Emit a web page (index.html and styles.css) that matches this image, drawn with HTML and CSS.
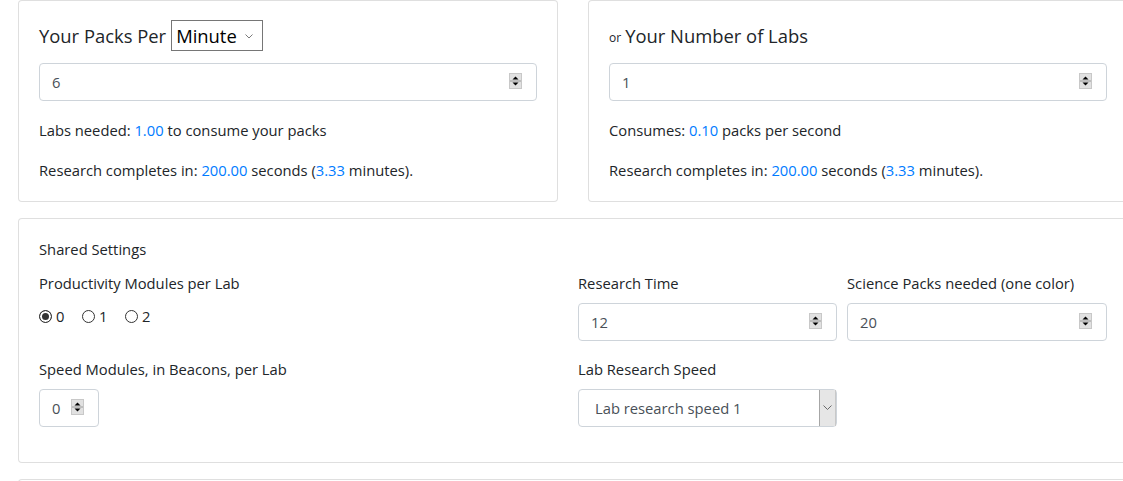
FILE: index.html
```html
<!DOCTYPE html>
<html lang="en">
<head>
<meta charset="utf-8">
<title>Research calculator</title>
<link rel="stylesheet" href="styles.css">
</head>
<body>
<div class="page">
  <div class="top-row">
    <section class="card calc">
      <div class="calc-title">
        <span>Your Packs Per</span>
        <span class="unit-wrap">
          <select class="unit"><option>Minute</option><option>Second</option></select>
          <svg class="unit-caret" width="8" height="5" viewBox="0 0 8 5"><path d="M0.5 0.5L4 4L7.5 0.5" fill="none" stroke="#7a7a7a" stroke-width="1"/></svg>
        </span>
      </div>
      <div class="num">
        <input class="field" type="number" value="6">
        <svg class="spin" width="13" height="16" viewBox="0 0 13 16"><rect x="0.5" y="0.5" width="12" height="15" fill="#e1e1e1" stroke="#c8c8c8"/><line x1="1" y1="8" x2="12" y2="8" stroke="#9a9a9a"/><path d="M3.5 6.5H9.5L6.5 3.5Z" fill="#000"/><path d="M3.5 9.5H9.5L6.5 12.5Z" fill="#000"/></svg>
      </div>
      <p>Labs needed: <span class="val">1.00</span> to consume your packs</p>
      <p>Research completes in: <span class="val">200.00</span> seconds (<span class="val">3.33</span> minutes).</p>
    </section>
    <section class="card calc">
      <div class="calc-title">
        <small class="or">or</small>
        <span>Your Number of Labs</span>
      </div>
      <div class="num">
        <input class="field" type="number" value="1">
        <svg class="spin" width="13" height="16" viewBox="0 0 13 16"><rect x="0.5" y="0.5" width="12" height="15" fill="#e1e1e1" stroke="#c8c8c8"/><line x1="1" y1="8" x2="12" y2="8" stroke="#9a9a9a"/><path d="M3.5 6.5H9.5L6.5 3.5Z" fill="#000"/><path d="M3.5 9.5H9.5L6.5 12.5Z" fill="#000"/></svg>
      </div>
      <p>Consumes: <span class="val">0.10</span> packs per second</p>
      <p>Research completes in: <span class="val">200.00</span> seconds (<span class="val">3.33</span> minutes).</p>
    </section>
  </div>

  <section class="card shared">
    <div class="shared-title">Shared Settings</div>
    <div class="shared-grid">
      <div class="group">
        <div class="label">Productivity Modules per Lab</div>
        <div class="radios">
          <label class="radio"><input type="radio" name="prod" checked><span>0</span></label>
          <label class="radio"><input type="radio" name="prod"><span>1</span></label>
          <label class="radio"><input type="radio" name="prod"><span>2</span></label>
        </div>
      </div>
      <div class="group">
        <div class="label">Research Time</div>
        <div class="num">
          <input class="field" type="number" value="12">
          <svg class="spin" width="13" height="16" viewBox="0 0 13 16"><rect x="0.5" y="0.5" width="12" height="15" fill="#e1e1e1" stroke="#c8c8c8"/><line x1="1" y1="8" x2="12" y2="8" stroke="#9a9a9a"/><path d="M3.5 6.5H9.5L6.5 3.5Z" fill="#000"/><path d="M3.5 9.5H9.5L6.5 12.5Z" fill="#000"/></svg>
        </div>
      </div>
      <div class="group">
        <div class="label">Science Packs needed (one color)</div>
        <div class="num">
          <input class="field" type="number" value="20">
          <svg class="spin" width="13" height="16" viewBox="0 0 13 16"><rect x="0.5" y="0.5" width="12" height="15" fill="#e1e1e1" stroke="#c8c8c8"/><line x1="1" y1="8" x2="12" y2="8" stroke="#9a9a9a"/><path d="M3.5 6.5H9.5L6.5 3.5Z" fill="#000"/><path d="M3.5 9.5H9.5L6.5 12.5Z" fill="#000"/></svg>
        </div>
      </div>
      <div class="group">
        <div class="label">Speed Modules, in Beacons, per Lab</div>
        <div class="num num-small">
          <input class="field" type="number" value="0">
          <svg class="spin" width="13" height="16" viewBox="0 0 13 16"><rect x="0.5" y="0.5" width="12" height="15" fill="#e1e1e1" stroke="#c8c8c8"/><line x1="1" y1="8" x2="12" y2="8" stroke="#9a9a9a"/><path d="M3.5 6.5H9.5L6.5 3.5Z" fill="#000"/><path d="M3.5 9.5H9.5L6.5 12.5Z" fill="#000"/></svg>
        </div>
      </div>
      <div class="group">
        <div class="label">Lab Research Speed</div>
        <div class="sel">
          <select class="field select"><option>Lab research speed 1</option><option>Lab research speed 2</option></select>
          <span class="sel-btn"><svg width="9" height="6" viewBox="0 0 9 6"><path d="M0.5 0.5L4.5 4.5L8.5 0.5" fill="none" stroke="#6a6a6a" stroke-width="1"/></svg></span>
        </div>
      </div>
    </div>
  </section>

  <section class="card next"></section>
</div>
</body>
</html>
```

FILE: styles.css
```css
html, body {
  margin: 0;
  padding: 0;
  overflow: hidden;
  background: #ffffff;
}

body {
  font-family: "Open Sans", "Noto Sans", "Liberation Sans", sans-serif;
  font-size: 14.75px;
  line-height: 24px;
  color: #212529;
}

.page {
  width: 1110px;
  padding-left: 18px;
}

.top-row {
  display: grid;
  grid-template-columns: 540px 540px;
  column-gap: 30px;
}

.card {
  box-sizing: border-box;
  border: 1px solid rgba(0, 0, 0, 0.125);
  border-radius: 4px;
  background: #fff;
}

.calc {
  padding: 19px 20px 19px;
}

.calc-title {
  display: flex;
  align-items: center;
  height: 31px;
  font-size: 18.4px;
  line-height: 24px;
  margin-bottom: 12px;
  white-space: pre;
}

.or {
  font-size: 12px;
  margin-right: 4px;
  position: relative;
  top: 2px;
}

.unit-wrap {
  position: relative;
  display: inline-flex;
  margin-left: 5px;
}

.unit {
  appearance: none;
  -webkit-appearance: none;
  width: 92px;
  height: 31px;
  box-sizing: border-box;
  border: 1px solid #767676;
  border-radius: 0;
  background: #fff;
  color: #000;
  font-family: inherit;
  font-size: 18.4px;
  padding: 0 0 0 4px;
  margin: 0;
}

.unit-caret {
  position: absolute;
  right: 10px;
  top: 14px;
  pointer-events: none;
}

.num {
  position: relative;
  margin-bottom: 17px;
}

.field {
  display: block;
  width: 100%;
  box-sizing: border-box;
  height: 38px;
  border: 1px solid #ced4da;
  border-radius: 4px;
  padding: 0 12px;
  margin: 0;
  font-family: inherit;
  font-size: 14.75px;
  color: #495057;
  background: #fff;
  -moz-appearance: textfield;
}

.field::-webkit-inner-spin-button,
.field::-webkit-outer-spin-button {
  -webkit-appearance: none;
  margin: 0;
}

.spin {
  position: absolute;
  right: 15px;
  top: 10px;
  display: block;
}

.num-small {
  width: 60px;
}

.calc p {
  margin: 0 0 16px;
}

.calc p:last-child {
  margin-bottom: 0;
}

.val {
  color: #007bff;
}

.shared {
  margin-top: 16px;
  width: 1110px;
  padding: 18px 20px 19px;
}

.shared-title {
  margin-bottom: 10px;
}

.shared-grid {
  display: grid;
  grid-template-columns: 1fr 259px 260px;
  column-gap: 10px;
}

.group .num,
.group .sel,
.group .radios {
  margin-bottom: 16px;
}

.group:nth-child(4) {
  grid-column: 1;
}

.group:nth-child(5) {
  grid-column: 2;
}

.label {
  margin-bottom: 8px;
}

.radios {
  display: flex;
  height: 38px;
  padding-top: 1px;
  box-sizing: border-box;
}

.radio {
  display: inline-flex;
  align-items: center;
  height: 24px;
  margin-right: 17.5px;
}

.radio input {
  appearance: none;
  -webkit-appearance: none;
  width: 13px;
  height: 13px;
  margin: 0 4px 0 0;
  border: 1px solid #333;
  border-radius: 50%;
  background: #fff;
  box-sizing: border-box;
}

.radio input:checked {
  background: #333;
  box-shadow: inset 0 0 0 2px #fff;
}

.radio span {
  color: #212529;
}

.sel {
  position: relative;
}

.select {
  appearance: none;
  -webkit-appearance: none;
  padding-left: 16px;
}

.sel-btn {
  position: absolute;
  right: 1px;
  top: 1px;
  bottom: 1px;
  width: 17px;
  box-sizing: border-box;
  background: #e6e6e6;
  border-left: 1px solid #a6a6a6;
  border-right: 1px solid #c8c8c8;
  display: flex;
  align-items: center;
  justify-content: center;
  pointer-events: none;
}

.next {
  margin-top: 16px;
  width: 1110px;
  height: 60px;
}
```
